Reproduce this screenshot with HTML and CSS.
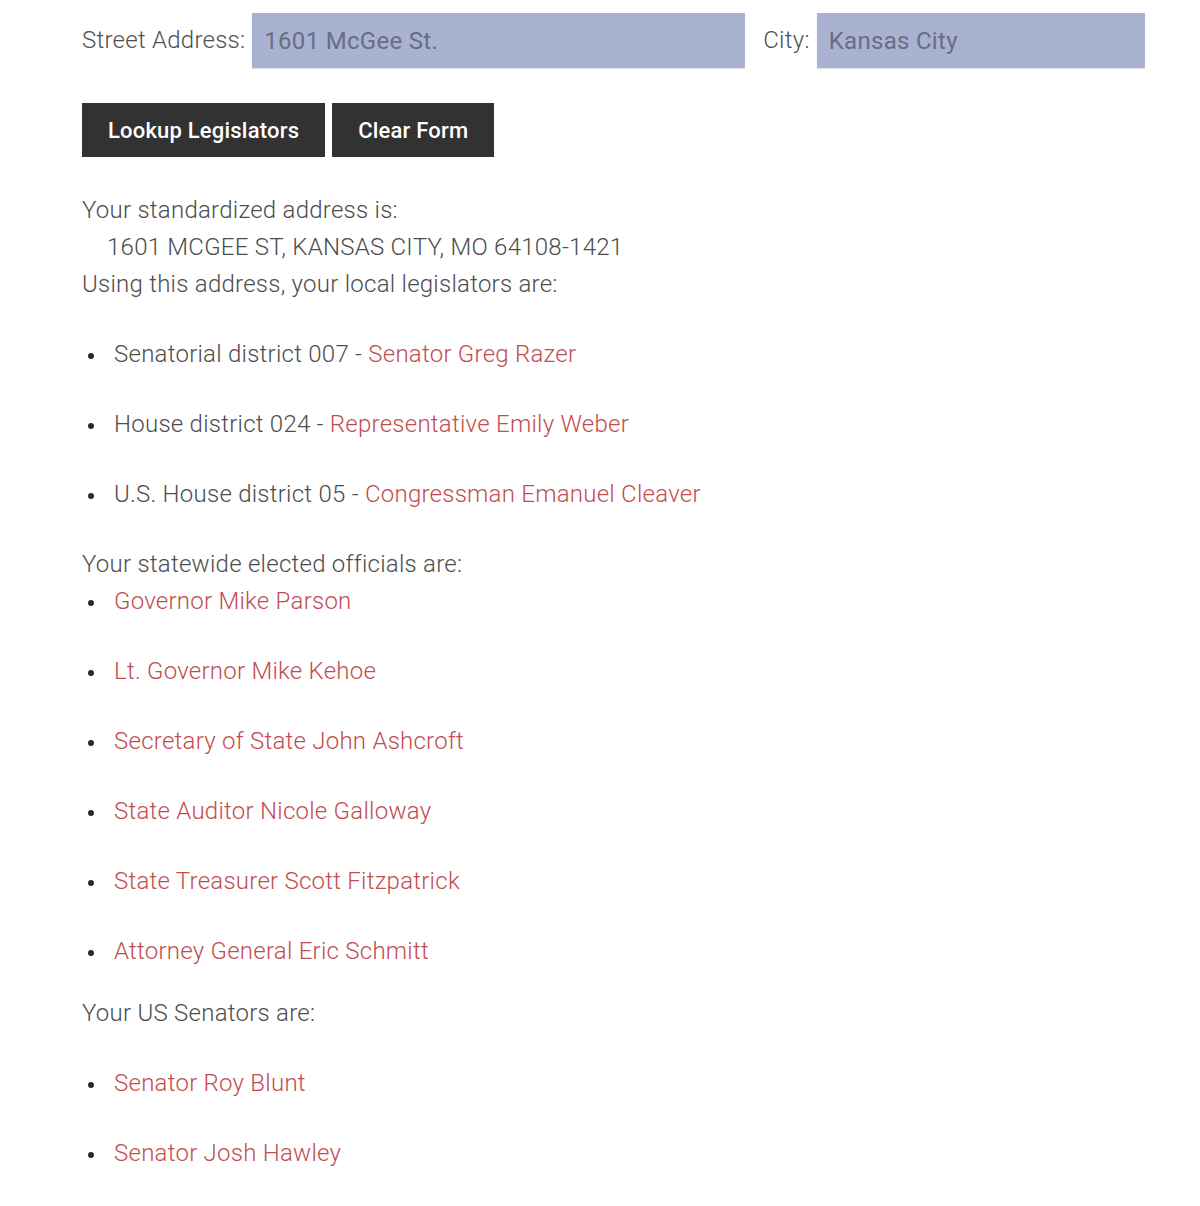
FILE: index.html
```html
<!DOCTYPE html>
<html lang="en">
<head>
<meta charset="utf-8">
<title>Legislator Lookup</title>
<link rel="stylesheet" href="styles.css">
</head>
<body>
<div class="page">
  <form class="lookup">
    <div class="fields">
      <label class="field street">
        <span class="label">Street Address:</span>
        <input class="input" type="text" value="1601 McGee St.">
      </label>
      <label class="field city">
        <span class="label">City:</span>
        <input class="input" type="text" value="Kansas City">
      </label>
    </div>
    <div class="buttons">
      <button type="button" class="btn">Lookup Legislators</button>
      <button type="button" class="btn">Clear Form</button>
    </div>
  </form>

  <div class="results">
    <p class="line">Your standardized address is:</p>
    <p class="line addr">1601 MCGEE ST, KANSAS CITY, MO 64108-1421</p>
    <p class="line">Using this address, your local legislators are:</p>
    <ul class="list local">
      <li>Senatorial district 007 - <a href="#">Senator Greg Razer</a></li>
      <li>House district 024 - <a href="#">Representative Emily Weber</a></li>
      <li>U.S. House district 05 - <a href="#">Congressman Emanuel Cleaver</a></li>
    </ul>
    <p class="line">Your statewide elected officials are:</p>
    <ul class="list statewide">
      <li><a href="#">Governor Mike Parson</a></li>
      <li><a href="#">Lt. Governor Mike Kehoe</a></li>
      <li><a href="#">Secretary of State John Ashcroft</a></li>
      <li><a href="#">State Auditor Nicole Galloway</a></li>
      <li><a href="#">State Treasurer Scott Fitzpatrick</a></li>
      <li><a href="#">Attorney General Eric Schmitt</a></li>
    </ul>
    <p class="line">Your US Senators are:</p>
    <ul class="list senators">
      <li><a href="#">Senator Roy Blunt</a></li>
      <li><a href="#">Senator Josh Hawley</a></li>
    </ul>
  </div>
</div>
</body>
</html>
```

FILE: styles.css
```css
html, body {
  margin: 0;
  padding: 0;
  background: #ffffff;
}

body {
  font-family: Roboto, "Liberation Sans", Arial, sans-serif;
  font-weight: 300;
  font-size: 24px;
  letter-spacing: 0.25px;
  line-height: 37px;
  color: #4d4d4d;
}

.page {
  padding: 13px 0 0 82px;
  width: 1062px;
}

.fields {
  display: flex;
  align-items: center;
  gap: 18px;
}

.field {
  display: flex;
  align-items: center;
  gap: 7px;
}

.field .label {
  white-space: nowrap;
  color: #505050;
}

.input {
  box-sizing: border-box;
  height: 55px;
  padding: 0 12px;
  border: none;
  border-radius: 0;
  background: #aab2d2;
  box-shadow: 0 1px 1px rgba(0, 0, 0, 0.12);
  font-family: inherit;
  font-weight: 400;
  font-size: 24px;
  letter-spacing: 0.3px;
  color: #676e83;
  outline: none;
}

.street .input { width: 493px; }
.city .input { width: 328px; }

.buttons {
  display: flex;
  gap: 7px;
  margin-top: 35px;
}

.btn {
  box-sizing: border-box;
  height: 54px;
  padding: 0 26px;
  border: none;
  border-radius: 0;
  background: #323232;
  color: #ffffff;
  font-family: inherit;
  font-weight: 500;
  font-size: 22px;
  letter-spacing: 0.2px;
  cursor: pointer;
}

.results {
  margin-top: 35px;
}

.line {
  margin: 0;
}

.addr {
  padding-left: 25px;
}

.list {
  margin: 0;
  padding: 0;
  list-style: none;
}

.list li::before {
  content: "";
  display: inline-block;
  width: 6px;
  height: 6px;
  margin: 0 20px 0 6px;
  border-radius: 50%;
  background: #2a2a2a;
  vertical-align: middle;
}

.list li + li {
  margin-top: 33px;
}

.local {
  margin: 33px 0;
}

.statewide {
  margin: 0 0 25px;
}

.senators {
  margin-top: 33px;
}

.list a {
  color: #c24d4f;
  text-decoration: none;
}
```
